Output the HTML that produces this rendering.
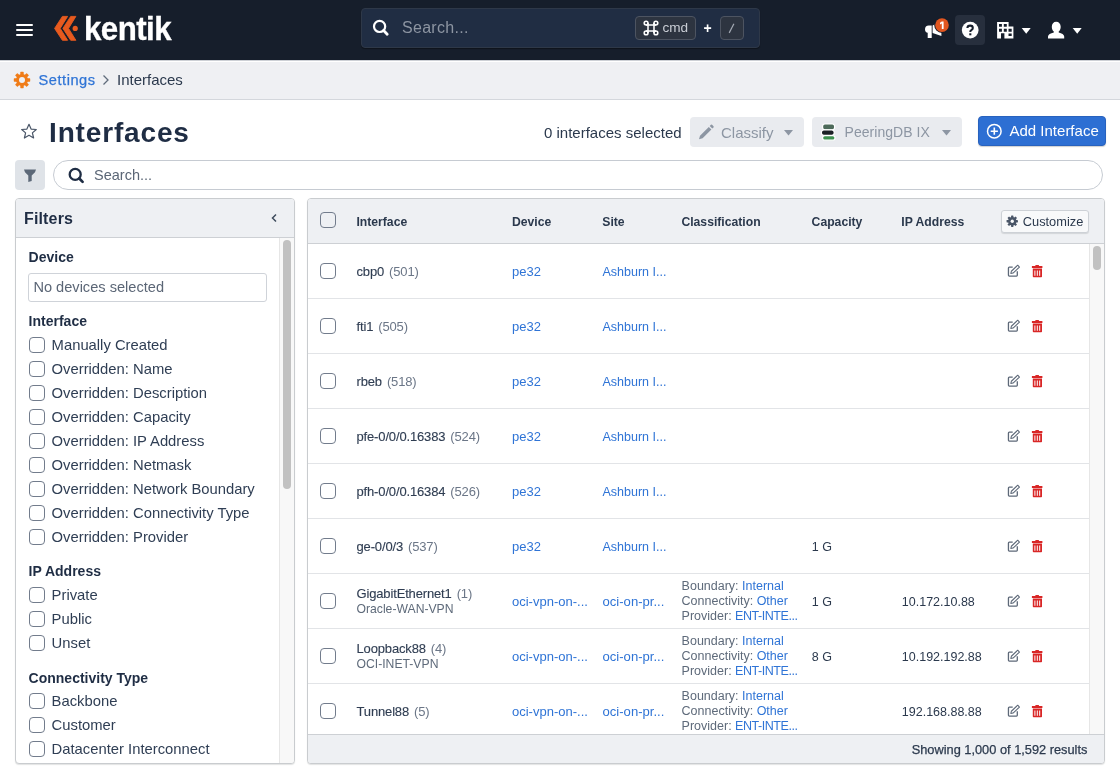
<!DOCTYPE html>
<html><head><meta charset="utf-8">
<style>
*{box-sizing:border-box;margin:0;padding:0}
html,body{width:1120px;height:784px;overflow:hidden;background:#fff;font-family:"Liberation Sans",sans-serif;color:#2b394d}
.a{position:absolute}
.t{position:absolute;white-space:nowrap;line-height:1}
#nav{left:0;top:0;width:1120px;height:60px;background:#161e2b}
#crumb{left:0;top:60px;width:1120px;height:40px;background:#eff0f3;border-bottom:1px solid #d4d7dc}
.cb{position:absolute;width:16px;height:16px;border:1.3px solid #727c8c;border-radius:4px;background:#fff}
.lk{color:#2f74d6}
</style></head><body><div id="root" style="position:absolute;left:0;top:0;width:1120px;height:784px;will-change:transform">
<!-- NAV -->
<div id="nav" class="a">
  <div class="a" style="left:16px;top:24px;width:17px;height:2px;background:#fff;border-radius:1px"></div>
  <div class="a" style="left:16px;top:29px;width:17px;height:2px;background:#fff;border-radius:1px"></div>
  <div class="a" style="left:16px;top:34px;width:17px;height:2px;background:#fff;border-radius:1px"></div>
  <svg class="a" style="left:0;top:0" width="90" height="60" viewBox="0 0 90 60">
    <polygon fill="#e85a1e" stroke="#e85a1e" stroke-width="0.9" stroke-linejoin="round" points="62.4,16.4 67.6,16.4 60.2,28.4 67.6,40.3 62.4,40.3 54.6,28.4"/>
    <polygon fill="#e85a1e" stroke="#e85a1e" stroke-width="0.9" stroke-linejoin="round" points="70.7,16.4 75.9,16.4 68.5,28.4 75.9,40.3 70.7,40.3 62.9,28.4"/>
    <circle fill="#e85a1e" cx="75.2" cy="28.4" r="2.6"/>
  </svg>
  <div class="t" id="logo" style="left:84px;top:11px;font-size:34px;font-weight:700;color:#fff;transform-origin:0 0;transform:scaleX(0.92);letter-spacing:-0.6px;-webkit-text-stroke:0.35px #fff">kentik</div>

  <div class="a" style="left:361px;top:8px;width:399px;height:40px;background:#202d43;border:1px solid #2e3848;border-radius:4px;box-shadow:0 1px 1px rgba(0,0,0,.35)"></div>
  <svg class="a" style="left:372px;top:19px" width="18" height="18" viewBox="0 0 18 18"><circle cx="7.6" cy="7.4" r="5.6" fill="none" stroke="#fff" stroke-width="2.2"/><line x1="11.6" y1="11.5" x2="15.2" y2="15.2" stroke="#fff" stroke-width="2.8" stroke-linecap="round"/></svg>
  <div class="t" style="left:402px;top:20px;font-size:16px;color:#8d95a2;letter-spacing:0.3px">Search...</div>
  <div class="a" style="left:635px;top:16px;width:61px;height:24px;border:1px solid #4d5461;background:#2d3440;border-radius:4px"></div>
  <svg class="a" style="left:642.6px;top:19.8px" width="16" height="16" viewBox="0 0 16 16"><g fill="none" stroke="#fff" stroke-width="1.55"><path d="M5,3 V13 M11,3 V13 M3,5 H13 M3,11 H13"/><circle cx="3.1" cy="3.1" r="1.9"/><circle cx="12.9" cy="3.1" r="1.9"/><circle cx="3.1" cy="12.9" r="1.9"/><circle cx="12.9" cy="12.9" r="1.9"/></g></svg>
  <div class="t" style="left:662.5px;top:21.2px;font-size:13.6px;color:#c9cdd4">cmd</div>
  <div class="t" style="left:703.5px;top:20.5px;font-size:14px;font-weight:700;color:#fff">+</div>
  <div class="a" style="left:720px;top:16px;width:24px;height:24px;border:1px solid #4d5461;background:#2d3440;border-radius:4px"></div>
  <svg class="a" style="left:726px;top:22px" width="12" height="12" viewBox="0 0 12 12"><line x1="7.9" y1="1.8" x2="3.2" y2="10.9" stroke="#a3a9b3" stroke-width="1.2"/></svg>

  <!-- megaphone -->
  <svg class="a" style="left:920px;top:14px" width="30" height="28" viewBox="920 14 30 28">
    <path fill="#fff" d="M925,29.2 q0,-3.8 3.8,-3.8 h2.9 v7.6 h-2.9 q-3.8,0 -3.8,-3.8z M927.7,32.2 h4 v5.7 h-4z M932.6,25.4 l8.8,-4.5 v15.2 l-8.8,-3.1z"/>
    <circle cx="942" cy="25.1" r="7.8" fill="#161e2b"/>
    <circle cx="942" cy="25.1" r="6.8" fill="#e2561f"/>
    <path fill="#fff" d="M941.8,21.4 h1.8 v7.5 h-1.8 v-5.5 l-1.8,1.1 v-1.7z"/>
  </svg>
  <div class="a" style="left:955px;top:15px;width:30px;height:30px;background:#272f3d;border-radius:4px"></div>
  <svg class="a" style="left:955px;top:15px" width="30" height="30" viewBox="0 0 30 30">
    <circle cx="15.2" cy="15.1" r="8.4" fill="#fff"/>
    <path d="M12.4,13 q0.1,-2.35 2.75,-2.35 q2.65,0 2.65,2.3 q0,1.4 -1.5,2.2 q-1,0.5 -1,1.8" fill="none" stroke="#161e2b" stroke-width="2.1"/>
    <rect x="14.25" y="18.3" width="2.1" height="2" fill="#161e2b"/>
  </svg>
  <!-- building -->
  <svg class="a" style="left:996px;top:21px" width="20" height="20" viewBox="996 21 20 20">
    <path fill="#fff" fill-rule="evenodd" d="M997.1,21.9 h11.5 v4.7 h4.8 v11.8 h-16.3z M999,23.9 h2.9 v2.8 h-2.9z M1003.8,23.9 h3 v2.8 h-3z M999,28.8 h2.9 v3 h-2.9z M1003.8,28.8 h3 v3 h-3z M1008.5,28.8 h3.2 v3 h-3.2z M1001,33.3 h3.4 v5.1 h-3.4z M1008.5,33.6 h3.2 v2.3 h-3.2z"/>
  </svg>
  <svg class="a" style="left:1021px;top:27px" width="11" height="8" viewBox="0 0 11 8"><polygon points="0.7,1 9.7,1 5.2,6.8" fill="#fff"/></svg>
  <!-- user -->
  <svg class="a" style="left:1046px;top:20px" width="20" height="20" viewBox="1046 20 20 20">
    <path fill="#fff" d="M1056.2,21.8 C1058.9,21.8 1060.7,23.8 1060.7,26.8 C1060.7,28.8 1060,30.6 1058.7,31.6 V32.6 C1061.8,33.3 1064.2,34.6 1064.2,36.6 V38.4 H1048 V36.6 C1048,34.6 1050.6,33.3 1053.8,32.6 V31.6 C1052.5,30.6 1051.8,28.8 1051.8,26.8 C1051.8,23.8 1053.6,21.8 1056.2,21.8z"/>
  </svg>
  <svg class="a" style="left:1072px;top:27px" width="11" height="8" viewBox="0 0 11 8"><polygon points="0.7,1 9.7,1 5.2,6.8" fill="#fff"/></svg>
</div>

<!-- BREADCRUMB -->
<div id="crumb" class="a"></div>
<div class="a" style="left:0;top:60px;width:1120px;height:1px;background:#cdd0d5"></div>
<div class="a" style="left:0;top:61px;width:1120px;height:1px;background:#fff"></div>
<svg class="a" style="left:13px;top:71px" width="18" height="18" viewBox="0 0 18 18">
  <g fill="#f07c18"><circle cx="9" cy="9" r="6"/>
  <rect x="7.3" y="0.8" width="3.4" height="16.4" rx="0.6"/>
  <rect x="7.3" y="0.8" width="3.4" height="16.4" rx="0.6" transform="rotate(45 9 9)"/>
  <rect x="7.3" y="0.8" width="3.4" height="16.4" rx="0.6" transform="rotate(90 9 9)"/>
  <rect x="7.3" y="0.8" width="3.4" height="16.4" rx="0.6" transform="rotate(135 9 9)"/></g>
  <circle cx="9" cy="9" r="3" fill="#eff0f3"/>
</svg>
<div class="t lk" style="left:38.5px;top:72.5px;font-size:14.6px;letter-spacing:0.55px;-webkit-text-stroke:0.25px #2f74d6">Settings</div>
<svg class="a" style="left:101px;top:74px" width="10" height="12" viewBox="0 0 10 12"><polyline points="2.5,1.5 7,6 2.5,10.5" fill="none" stroke="#5f6b7b" stroke-width="1.3"/></svg>
<div class="t" style="left:117px;top:72px;font-size:15px;color:#2b394d">Interfaces</div>

<!-- PAGE HEADER -->
<svg class="a" style="left:20px;top:123px" width="18" height="17" viewBox="0 0 18 17">
  <polygon points="9,1.3 11.1,6.1 16.3,6.5 12.4,9.9 13.6,15 9,12.3 4.4,15 5.6,9.9 1.7,6.5 6.9,6.1" fill="none" stroke="#4a5668" stroke-width="1.2" stroke-linejoin="round"/>
</svg>
<div class="t" style="left:49px;top:119px;font-size:28px;font-weight:700;color:#1f2d44;letter-spacing:0.85px">Interfaces</div>
<div class="t" style="left:544px;top:124.5px;font-size:15px;color:#2b394d">0 interfaces selected</div>
<div class="a" style="left:690px;top:117px;width:114px;height:30px;background:#e9ebef;border-radius:4px"></div>
<svg class="a" style="left:697px;top:124px" width="18" height="17" viewBox="0 0 18 17"><path d="M2,15.3 l1,-3.6 l8.8,-8.8 l2.6,2.6 l-8.8,8.8z M12.7,2 l1.2,-1.2 q0.6,-0.5 1.2,0 l1.4,1.4 q0.5,0.6 0,1.2 l-1.2,1.2z" fill="#8d96a3"/></svg>
<div class="t" style="left:721px;top:124.6px;font-size:15px;color:#8d96a3">Classify</div>
<svg class="a" style="left:783px;top:129px" width="11" height="8" viewBox="0 0 11 8"><polygon points="1,1 10,1 5.5,6.5" fill="#8d96a3"/></svg>

<div class="a" style="left:812px;top:117px;width:150px;height:30px;background:#e9ebef;border-radius:4px"></div>
<svg class="a" style="left:815px;top:118px" width="26" height="28" viewBox="815 118 26 28">
  <g stroke="#fff" stroke-width="1.2">
  <rect x="822.6" y="124" width="12" height="5.8" rx="2.2" fill="#4d6a5a"/>
  <rect x="821.4" y="130" width="12.8" height="5.3" rx="2.4" fill="#1b2025"/>
  <rect x="822.6" y="135.6" width="12.4" height="4.6" rx="2.2" fill="#3e9150"/>
  </g>
</svg>
<div class="t" style="left:844.5px;top:125.2px;font-size:14px;color:#8d96a3;letter-spacing:0.05px">PeeringDB IX</div>
<svg class="a" style="left:941px;top:129px" width="11" height="8" viewBox="0 0 11 8"><polygon points="1,1 10,1 5.5,6.5" fill="#8d96a3"/></svg>

<div class="a" style="left:978px;top:116px;width:128px;height:30px;background:#2d6fd3;border-radius:4px;border:1px solid #2862be;box-shadow:0 1px 1px rgba(16,22,26,.2)"></div>
<svg class="a" style="left:985px;top:122px" width="18" height="18" viewBox="0 0 18 18"><circle cx="9.3" cy="9.2" r="6.8" fill="none" stroke="#fff" stroke-width="1.5"/><path d="M9.3,5.6 v7.2 M5.7,9.2 h7.2" stroke="#fff" stroke-width="1.6"/></svg>
<div class="t" style="left:1009.5px;top:123.4px;font-size:15px;color:#fff">Add Interface</div>

<!-- filter button & search -->
<div class="a" style="left:15px;top:160px;width:30px;height:30px;background:#dfe3e8;border-radius:4px"></div>
<svg class="a" style="left:22px;top:167px" width="16" height="16" viewBox="0 0 16 16"><path d="M2,2.5 h12 l-1,2.8 l-3.3,3.3 v5.4 l-3.4,1 v-6.4 l-3.3,-3.3z" fill="#5c6878"/></svg>
<div class="a" style="left:53px;top:160px;width:1050px;height:30px;border:1px solid #c6cbd2;border-radius:15px;background:#fff"></div>
<svg class="a" style="left:67px;top:167px" width="18" height="18" viewBox="0 0 18 18"><circle cx="8.2" cy="7.4" r="5.5" fill="none" stroke="#1f2d44" stroke-width="2.3"/><line x1="12.3" y1="11.5" x2="15.6" y2="14.9" stroke="#1f2d44" stroke-width="2.7" stroke-linecap="round"/></svg>
<div class="t" style="left:94px;top:168px;font-size:14.5px;color:#5b6676">Search...</div>

<!-- FILTER PANEL -->
<div class="a" id="fp" style="left:15px;top:198px;width:280px;height:566px;border:1px solid #c9cccf;border-radius:4px;background:#fff;overflow:hidden;box-shadow:0 1px 1px rgba(16,22,26,.12)">
  <div class="a" style="left:0;top:0;width:278px;height:39px;background:#eef0f3;border-bottom:1px solid #cdd0d4"></div>
  <div class="a" style="left:263px;top:39px;width:15px;height:526px;background:#f8f8f8;border-left:1px solid #e6e6e6"></div>
  <div class="a" style="left:267px;top:41px;width:8px;height:249px;background:#c1c1c1;border-radius:4px"></div>
</div>
<div class="t" style="left:24px;top:210.6px;font-size:16px;font-weight:700;color:#1f2d44;letter-spacing:0.15px">Filters</div>
<svg class="a" style="left:269px;top:212px" width="10" height="12" viewBox="0 0 10 12"><polyline points="7,2.5 3.5,6 7,9.5" fill="none" stroke="#3e4b5d" stroke-width="1.5"/></svg>

<div class="t" style="left:28.6px;top:250.15px;font-size:14px;font-weight:700;color:#1f2d44">Device</div>
<div class="a" style="left:28px;top:272.5px;width:239px;height:29.5px;border:1px solid #cfd3d9;border-radius:3px"></div>
<div class="t" style="left:33.4px;top:280.14px;font-size:14.6px;color:#5b6676">No devices selected</div>
<div class="t" style="left:28.6px;top:314.25px;font-size:14px;font-weight:700;color:#1f2d44">Interface</div>
<div class="cb" style="left:29px;top:337px"></div>
<div class="t" style="left:51.6px;top:337.57px;font-size:14.8px;color:#2f3e54">Manually Created</div>
<div class="cb" style="left:29px;top:361px"></div>
<div class="t" style="left:51.6px;top:361.57px;font-size:14.8px;color:#2f3e54">Overridden: Name</div>
<div class="cb" style="left:29px;top:385px"></div>
<div class="t" style="left:51.6px;top:385.57px;font-size:14.8px;color:#2f3e54">Overridden: Description</div>
<div class="cb" style="left:29px;top:409px"></div>
<div class="t" style="left:51.6px;top:409.57px;font-size:14.8px;color:#2f3e54">Overridden: Capacity</div>
<div class="cb" style="left:29px;top:433px"></div>
<div class="t" style="left:51.6px;top:433.57px;font-size:14.8px;color:#2f3e54">Overridden: IP Address</div>
<div class="cb" style="left:29px;top:457px"></div>
<div class="t" style="left:51.6px;top:457.57px;font-size:14.8px;color:#2f3e54">Overridden: Netmask</div>
<div class="cb" style="left:29px;top:481px"></div>
<div class="t" style="left:51.6px;top:481.57px;font-size:14.8px;color:#2f3e54">Overridden: Network Boundary</div>
<div class="cb" style="left:29px;top:505px"></div>
<div class="t" style="left:51.6px;top:505.57px;font-size:14.8px;color:#2f3e54">Overridden: Connectivity Type</div>
<div class="cb" style="left:29px;top:529px"></div>
<div class="t" style="left:51.6px;top:529.57px;font-size:14.8px;color:#2f3e54">Overridden: Provider</div>
<div class="t" style="left:28.6px;top:564.45px;font-size:14px;font-weight:700;color:#1f2d44">IP Address</div>
<div class="cb" style="left:29px;top:587px"></div>
<div class="t" style="left:51.6px;top:587.77px;font-size:14.8px;color:#2f3e54">Private</div>
<div class="cb" style="left:29px;top:611px"></div>
<div class="t" style="left:51.6px;top:611.77px;font-size:14.8px;color:#2f3e54">Public</div>
<div class="cb" style="left:29px;top:635px"></div>
<div class="t" style="left:51.6px;top:635.77px;font-size:14.8px;color:#2f3e54">Unset</div>
<div class="t" style="left:28.6px;top:670.85px;font-size:14px;font-weight:700;color:#1f2d44">Connectivity Type</div>
<div class="cb" style="left:29px;top:693px"></div>
<div class="t" style="left:51.6px;top:693.87px;font-size:14.8px;color:#2f3e54">Backbone</div>
<div class="cb" style="left:29px;top:717px"></div>
<div class="t" style="left:51.6px;top:717.87px;font-size:14.8px;color:#2f3e54">Customer</div>
<div class="cb" style="left:29px;top:741px"></div>
<div class="t" style="left:51.6px;top:741.87px;font-size:14.8px;color:#2f3e54">Datacenter Interconnect</div>


<!-- TABLE PANEL -->
<div class="a" id="tp" style="left:307px;top:198px;width:798px;height:566px;border:1px solid #c9cccf;border-radius:4px;background:#fff;overflow:hidden;box-shadow:0 1px 1px rgba(16,22,26,.12)">
  <div class="a" style="left:0;top:0;width:796px;height:45px;background:#eef0f3;border-bottom:1px solid #cdd0d4"></div>
  <div class="a" style="left:781px;top:45px;width:15px;height:490px;background:#f8f8f8;border-left:1px solid #e6e6e6"></div>
  <div class="a" style="left:785px;top:47px;width:8px;height:24px;background:#c1c1c1;border-radius:4px"></div>
  <div class="a" style="left:0;top:535px;width:796px;height:30px;background:#eef0f3;border-top:1px solid #cdd0d4"></div>
</div>
<div class="cb" style="left:320px;top:212px;background:transparent"></div>
<div class="t" style="left:356.4px;top:215.87px;font-size:12.2px;font-weight:700;color:#2b394d">Interface</div>
<div class="t" style="left:512px;top:215.87px;font-size:12.2px;font-weight:700;color:#2b394d">Device</div>
<div class="t" style="left:602.3px;top:215.87px;font-size:12.2px;font-weight:700;color:#2b394d">Site</div>
<div class="t" style="left:681.4px;top:215.87px;font-size:12.2px;font-weight:700;color:#2b394d">Classification</div>
<div class="t" style="left:811.6px;top:215.87px;font-size:12.2px;font-weight:700;color:#2b394d">Capacity</div>
<div class="t" style="left:901.3px;top:215.87px;font-size:12.2px;font-weight:700;color:#2b394d">IP Address</div>
<div class="a" style="left:1001px;top:209.5px;width:88px;height:23.5px;background:#f8f9fa;border:1px solid #cdd1d6;border-radius:3px;box-shadow:0 1px 1px rgba(16,22,26,.12)"></div>
<svg class="a" style="left:1006px;top:215px" width="12.5" height="12.5" viewBox="0 0 18 18"><g fill="#4a5668"><circle cx="9" cy="9" r="6"/><rect x="7.3" y="0.8" width="3.4" height="16.4" rx="0.6"/><rect x="7.3" y="0.8" width="3.4" height="16.4" rx="0.6" transform="rotate(45 9 9)"/><rect x="7.3" y="0.8" width="3.4" height="16.4" rx="0.6" transform="rotate(90 9 9)"/><rect x="7.3" y="0.8" width="3.4" height="16.4" rx="0.6" transform="rotate(135 9 9)"/></g><circle cx="9" cy="9" r="2.4" fill="#f8f9fa"/></svg>
<div class="t" style="left:1022.8px;top:215.66px;font-size:12.8px;color:#2b394d">Customize</div>
<div class="a" style="left:0;top:244px;width:1120px;height:490px;overflow:hidden"><div class="a" style="left:0;top:-244px;width:1120px;height:784px"><div class="a" style="left:308px;top:298px;width:781px;height:1px;background:#e2e4e7"></div>
<div class="cb" style="left:320px;top:263px"></div>
<div class="t" style="left:356.5px;top:264.70px;font-size:13px;color:#2f3d52;letter-spacing:-0.15px"><span style="-webkit-text-stroke:0.12px #2f3d52">cbp0</span> <span style="color:#6b7687;margin-left:1.5px">(501)</span></div>
<div class="t" style="left:512px;top:264.70px;font-size:13px;color:#2f74d6">pe32</div>
<div class="t" style="left:602.5px;top:265.62px;font-size:12.5px;color:#2f74d6">Ashburn I...</div>
<svg class="a" style="left:1006px;top:264px" width="15" height="14" viewBox="0 0 15 14"><path d="M6.7,3.15 H3.3 Q2.45,3.15 2.45,4 V11.3 Q2.45,12.1 3.3,12.1 H10.5 Q11.3,12.1 11.3,11.3 V7.3" fill="none" stroke="#5d6878" stroke-width="1.3"/><path d="M4.8,9.5 L5.35,7.25 L11.7,1.2 L13.45,3.05 L7.05,9.05 Z" fill="none" stroke="#5d6878" stroke-width="1.05" stroke-linejoin="round"/></svg>
<svg class="a" style="left:1031px;top:264px" width="13" height="14" viewBox="0 0 13 14"><path d="M0.9,2 H11.4 V4 H0.9z M4.4,1 H7.9 V2.2 H4.4z" fill="#d92626"/><path d="M1.8,4.6 H11 V12.4 Q11,13.2 10.2,13.2 H2.6 Q1.8,13.2 1.8,12.4z" fill="#d92626"/><path d="M3.9,6.5 V11.8 M6.3,6.5 V11.8 M8.7,6.5 V11.8" stroke="#fff" stroke-width="1"/></svg>
<div class="a" style="left:308px;top:353px;width:781px;height:1px;background:#e2e4e7"></div>
<div class="cb" style="left:320px;top:318px"></div>
<div class="t" style="left:356.5px;top:319.70px;font-size:13px;color:#2f3d52;letter-spacing:-0.15px"><span style="-webkit-text-stroke:0.12px #2f3d52">fti1</span> <span style="color:#6b7687;margin-left:1.5px">(505)</span></div>
<div class="t" style="left:512px;top:319.70px;font-size:13px;color:#2f74d6">pe32</div>
<div class="t" style="left:602.5px;top:320.62px;font-size:12.5px;color:#2f74d6">Ashburn I...</div>
<svg class="a" style="left:1006px;top:319px" width="15" height="14" viewBox="0 0 15 14"><path d="M6.7,3.15 H3.3 Q2.45,3.15 2.45,4 V11.3 Q2.45,12.1 3.3,12.1 H10.5 Q11.3,12.1 11.3,11.3 V7.3" fill="none" stroke="#5d6878" stroke-width="1.3"/><path d="M4.8,9.5 L5.35,7.25 L11.7,1.2 L13.45,3.05 L7.05,9.05 Z" fill="none" stroke="#5d6878" stroke-width="1.05" stroke-linejoin="round"/></svg>
<svg class="a" style="left:1031px;top:319px" width="13" height="14" viewBox="0 0 13 14"><path d="M0.9,2 H11.4 V4 H0.9z M4.4,1 H7.9 V2.2 H4.4z" fill="#d92626"/><path d="M1.8,4.6 H11 V12.4 Q11,13.2 10.2,13.2 H2.6 Q1.8,13.2 1.8,12.4z" fill="#d92626"/><path d="M3.9,6.5 V11.8 M6.3,6.5 V11.8 M8.7,6.5 V11.8" stroke="#fff" stroke-width="1"/></svg>
<div class="a" style="left:308px;top:408px;width:781px;height:1px;background:#e2e4e7"></div>
<div class="cb" style="left:320px;top:373px"></div>
<div class="t" style="left:356.5px;top:374.70px;font-size:13px;color:#2f3d52;letter-spacing:-0.15px"><span style="-webkit-text-stroke:0.12px #2f3d52">rbeb</span> <span style="color:#6b7687;margin-left:1.5px">(518)</span></div>
<div class="t" style="left:512px;top:374.70px;font-size:13px;color:#2f74d6">pe32</div>
<div class="t" style="left:602.5px;top:375.62px;font-size:12.5px;color:#2f74d6">Ashburn I...</div>
<svg class="a" style="left:1006px;top:374px" width="15" height="14" viewBox="0 0 15 14"><path d="M6.7,3.15 H3.3 Q2.45,3.15 2.45,4 V11.3 Q2.45,12.1 3.3,12.1 H10.5 Q11.3,12.1 11.3,11.3 V7.3" fill="none" stroke="#5d6878" stroke-width="1.3"/><path d="M4.8,9.5 L5.35,7.25 L11.7,1.2 L13.45,3.05 L7.05,9.05 Z" fill="none" stroke="#5d6878" stroke-width="1.05" stroke-linejoin="round"/></svg>
<svg class="a" style="left:1031px;top:374px" width="13" height="14" viewBox="0 0 13 14"><path d="M0.9,2 H11.4 V4 H0.9z M4.4,1 H7.9 V2.2 H4.4z" fill="#d92626"/><path d="M1.8,4.6 H11 V12.4 Q11,13.2 10.2,13.2 H2.6 Q1.8,13.2 1.8,12.4z" fill="#d92626"/><path d="M3.9,6.5 V11.8 M6.3,6.5 V11.8 M8.7,6.5 V11.8" stroke="#fff" stroke-width="1"/></svg>
<div class="a" style="left:308px;top:463px;width:781px;height:1px;background:#e2e4e7"></div>
<div class="cb" style="left:320px;top:428px"></div>
<div class="t" style="left:356.5px;top:429.70px;font-size:13px;color:#2f3d52;letter-spacing:-0.15px"><span style="-webkit-text-stroke:0.12px #2f3d52">pfe-0/0/0.16383</span> <span style="color:#6b7687;margin-left:1.5px">(524)</span></div>
<div class="t" style="left:512px;top:429.70px;font-size:13px;color:#2f74d6">pe32</div>
<div class="t" style="left:602.5px;top:430.62px;font-size:12.5px;color:#2f74d6">Ashburn I...</div>
<svg class="a" style="left:1006px;top:429px" width="15" height="14" viewBox="0 0 15 14"><path d="M6.7,3.15 H3.3 Q2.45,3.15 2.45,4 V11.3 Q2.45,12.1 3.3,12.1 H10.5 Q11.3,12.1 11.3,11.3 V7.3" fill="none" stroke="#5d6878" stroke-width="1.3"/><path d="M4.8,9.5 L5.35,7.25 L11.7,1.2 L13.45,3.05 L7.05,9.05 Z" fill="none" stroke="#5d6878" stroke-width="1.05" stroke-linejoin="round"/></svg>
<svg class="a" style="left:1031px;top:429px" width="13" height="14" viewBox="0 0 13 14"><path d="M0.9,2 H11.4 V4 H0.9z M4.4,1 H7.9 V2.2 H4.4z" fill="#d92626"/><path d="M1.8,4.6 H11 V12.4 Q11,13.2 10.2,13.2 H2.6 Q1.8,13.2 1.8,12.4z" fill="#d92626"/><path d="M3.9,6.5 V11.8 M6.3,6.5 V11.8 M8.7,6.5 V11.8" stroke="#fff" stroke-width="1"/></svg>
<div class="a" style="left:308px;top:518px;width:781px;height:1px;background:#e2e4e7"></div>
<div class="cb" style="left:320px;top:483px"></div>
<div class="t" style="left:356.5px;top:484.70px;font-size:13px;color:#2f3d52;letter-spacing:-0.15px"><span style="-webkit-text-stroke:0.12px #2f3d52">pfh-0/0/0.16384</span> <span style="color:#6b7687;margin-left:1.5px">(526)</span></div>
<div class="t" style="left:512px;top:484.70px;font-size:13px;color:#2f74d6">pe32</div>
<div class="t" style="left:602.5px;top:485.62px;font-size:12.5px;color:#2f74d6">Ashburn I...</div>
<svg class="a" style="left:1006px;top:484px" width="15" height="14" viewBox="0 0 15 14"><path d="M6.7,3.15 H3.3 Q2.45,3.15 2.45,4 V11.3 Q2.45,12.1 3.3,12.1 H10.5 Q11.3,12.1 11.3,11.3 V7.3" fill="none" stroke="#5d6878" stroke-width="1.3"/><path d="M4.8,9.5 L5.35,7.25 L11.7,1.2 L13.45,3.05 L7.05,9.05 Z" fill="none" stroke="#5d6878" stroke-width="1.05" stroke-linejoin="round"/></svg>
<svg class="a" style="left:1031px;top:484px" width="13" height="14" viewBox="0 0 13 14"><path d="M0.9,2 H11.4 V4 H0.9z M4.4,1 H7.9 V2.2 H4.4z" fill="#d92626"/><path d="M1.8,4.6 H11 V12.4 Q11,13.2 10.2,13.2 H2.6 Q1.8,13.2 1.8,12.4z" fill="#d92626"/><path d="M3.9,6.5 V11.8 M6.3,6.5 V11.8 M8.7,6.5 V11.8" stroke="#fff" stroke-width="1"/></svg>
<div class="a" style="left:308px;top:573px;width:781px;height:1px;background:#e2e4e7"></div>
<div class="cb" style="left:320px;top:538px"></div>
<div class="t" style="left:356.5px;top:539.70px;font-size:13px;color:#2f3d52;letter-spacing:-0.15px"><span style="-webkit-text-stroke:0.12px #2f3d52">ge-0/0/3</span> <span style="color:#6b7687;margin-left:1.5px">(537)</span></div>
<div class="t" style="left:512px;top:539.70px;font-size:13px;color:#2f74d6">pe32</div>
<div class="t" style="left:602.5px;top:540.62px;font-size:12.5px;color:#2f74d6">Ashburn I...</div>
<div class="t" style="left:811.8px;top:540.92px;font-size:12.5px;color:#2b394d">1 G</div>
<svg class="a" style="left:1006px;top:539px" width="15" height="14" viewBox="0 0 15 14"><path d="M6.7,3.15 H3.3 Q2.45,3.15 2.45,4 V11.3 Q2.45,12.1 3.3,12.1 H10.5 Q11.3,12.1 11.3,11.3 V7.3" fill="none" stroke="#5d6878" stroke-width="1.3"/><path d="M4.8,9.5 L5.35,7.25 L11.7,1.2 L13.45,3.05 L7.05,9.05 Z" fill="none" stroke="#5d6878" stroke-width="1.05" stroke-linejoin="round"/></svg>
<svg class="a" style="left:1031px;top:539px" width="13" height="14" viewBox="0 0 13 14"><path d="M0.9,2 H11.4 V4 H0.9z M4.4,1 H7.9 V2.2 H4.4z" fill="#d92626"/><path d="M1.8,4.6 H11 V12.4 Q11,13.2 10.2,13.2 H2.6 Q1.8,13.2 1.8,12.4z" fill="#d92626"/><path d="M3.9,6.5 V11.8 M6.3,6.5 V11.8 M8.7,6.5 V11.8" stroke="#fff" stroke-width="1"/></svg>
<div class="a" style="left:308px;top:628px;width:781px;height:1px;background:#e2e4e7"></div>
<div class="cb" style="left:320px;top:593px"></div>
<div class="t" style="left:356.5px;top:587.10px;font-size:13px;color:#2f3d52;letter-spacing:-0.15px"><span style="-webkit-text-stroke:0.12px #2f3d52">GigabitEthernet1</span> <span style="color:#6b7687;margin-left:1.5px">(1)</span></div>
<div class="t" style="left:356.5px;top:602.87px;font-size:12.2px;color:#5e6a7a">Oracle-WAN-VPN</div>
<div class="t" style="left:512px;top:594.70px;font-size:13px;color:#2f74d6">oci-vpn-on-...</div>
<div class="t" style="left:602.5px;top:594.61px;font-size:13.1px;color:#2f74d6">oci-on-pr...</div>
<div class="t" style="left:681.6px;top:579.82px;font-size:12.5px;color:#5e6a7a">Boundary: <span style="color:#2f74d6">Internal</span></div>
<div class="t" style="left:681.6px;top:595.22px;font-size:12.5px;color:#5e6a7a">Connectivity: <span style="color:#2f74d6">Other</span></div>
<div class="t" style="left:681.6px;top:610.22px;font-size:12.5px;color:#5e6a7a">Provider: <span style="color:#2f74d6;letter-spacing:-0.45px">ENT-INTE...</span></div>
<div class="t" style="left:811.8px;top:595.92px;font-size:12.5px;color:#2b394d">1 G</div>
<div class="t" style="left:901.8px;top:595.92px;font-size:12.5px;color:#2b394d">10.172.10.88</div>
<svg class="a" style="left:1006px;top:594px" width="15" height="14" viewBox="0 0 15 14"><path d="M6.7,3.15 H3.3 Q2.45,3.15 2.45,4 V11.3 Q2.45,12.1 3.3,12.1 H10.5 Q11.3,12.1 11.3,11.3 V7.3" fill="none" stroke="#5d6878" stroke-width="1.3"/><path d="M4.8,9.5 L5.35,7.25 L11.7,1.2 L13.45,3.05 L7.05,9.05 Z" fill="none" stroke="#5d6878" stroke-width="1.05" stroke-linejoin="round"/></svg>
<svg class="a" style="left:1031px;top:594px" width="13" height="14" viewBox="0 0 13 14"><path d="M0.9,2 H11.4 V4 H0.9z M4.4,1 H7.9 V2.2 H4.4z" fill="#d92626"/><path d="M1.8,4.6 H11 V12.4 Q11,13.2 10.2,13.2 H2.6 Q1.8,13.2 1.8,12.4z" fill="#d92626"/><path d="M3.9,6.5 V11.8 M6.3,6.5 V11.8 M8.7,6.5 V11.8" stroke="#fff" stroke-width="1"/></svg>
<div class="a" style="left:308px;top:683px;width:781px;height:1px;background:#e2e4e7"></div>
<div class="cb" style="left:320px;top:648px"></div>
<div class="t" style="left:356.5px;top:642.10px;font-size:13px;color:#2f3d52;letter-spacing:-0.15px"><span style="-webkit-text-stroke:0.12px #2f3d52">Loopback88</span> <span style="color:#6b7687;margin-left:1.5px">(4)</span></div>
<div class="t" style="left:356.5px;top:657.87px;font-size:12.2px;color:#5e6a7a">OCI-INET-VPN</div>
<div class="t" style="left:512px;top:649.70px;font-size:13px;color:#2f74d6">oci-vpn-on-...</div>
<div class="t" style="left:602.5px;top:649.61px;font-size:13.1px;color:#2f74d6">oci-on-pr...</div>
<div class="t" style="left:681.6px;top:634.82px;font-size:12.5px;color:#5e6a7a">Boundary: <span style="color:#2f74d6">Internal</span></div>
<div class="t" style="left:681.6px;top:650.22px;font-size:12.5px;color:#5e6a7a">Connectivity: <span style="color:#2f74d6">Other</span></div>
<div class="t" style="left:681.6px;top:665.22px;font-size:12.5px;color:#5e6a7a">Provider: <span style="color:#2f74d6;letter-spacing:-0.45px">ENT-INTE...</span></div>
<div class="t" style="left:811.8px;top:650.92px;font-size:12.5px;color:#2b394d">8 G</div>
<div class="t" style="left:901.8px;top:650.92px;font-size:12.5px;color:#2b394d">10.192.192.88</div>
<svg class="a" style="left:1006px;top:649px" width="15" height="14" viewBox="0 0 15 14"><path d="M6.7,3.15 H3.3 Q2.45,3.15 2.45,4 V11.3 Q2.45,12.1 3.3,12.1 H10.5 Q11.3,12.1 11.3,11.3 V7.3" fill="none" stroke="#5d6878" stroke-width="1.3"/><path d="M4.8,9.5 L5.35,7.25 L11.7,1.2 L13.45,3.05 L7.05,9.05 Z" fill="none" stroke="#5d6878" stroke-width="1.05" stroke-linejoin="round"/></svg>
<svg class="a" style="left:1031px;top:649px" width="13" height="14" viewBox="0 0 13 14"><path d="M0.9,2 H11.4 V4 H0.9z M4.4,1 H7.9 V2.2 H4.4z" fill="#d92626"/><path d="M1.8,4.6 H11 V12.4 Q11,13.2 10.2,13.2 H2.6 Q1.8,13.2 1.8,12.4z" fill="#d92626"/><path d="M3.9,6.5 V11.8 M6.3,6.5 V11.8 M8.7,6.5 V11.8" stroke="#fff" stroke-width="1"/></svg>
<div class="a" style="left:308px;top:738px;width:781px;height:1px;background:#e2e4e7"></div>
<div class="cb" style="left:320px;top:703px"></div>
<div class="t" style="left:356.5px;top:704.70px;font-size:13px;color:#2f3d52;letter-spacing:-0.15px"><span style="-webkit-text-stroke:0.12px #2f3d52">Tunnel88</span> <span style="color:#6b7687;margin-left:1.5px">(5)</span></div>
<div class="t" style="left:512px;top:704.70px;font-size:13px;color:#2f74d6">oci-vpn-on-...</div>
<div class="t" style="left:602.5px;top:704.61px;font-size:13.1px;color:#2f74d6">oci-on-pr...</div>
<div class="t" style="left:681.6px;top:689.82px;font-size:12.5px;color:#5e6a7a">Boundary: <span style="color:#2f74d6">Internal</span></div>
<div class="t" style="left:681.6px;top:705.22px;font-size:12.5px;color:#5e6a7a">Connectivity: <span style="color:#2f74d6">Other</span></div>
<div class="t" style="left:681.6px;top:720.22px;font-size:12.5px;color:#5e6a7a">Provider: <span style="color:#2f74d6;letter-spacing:-0.45px">ENT-INTE...</span></div>
<div class="t" style="left:901.8px;top:705.92px;font-size:12.5px;color:#2b394d">192.168.88.88</div>
<svg class="a" style="left:1006px;top:704px" width="15" height="14" viewBox="0 0 15 14"><path d="M6.7,3.15 H3.3 Q2.45,3.15 2.45,4 V11.3 Q2.45,12.1 3.3,12.1 H10.5 Q11.3,12.1 11.3,11.3 V7.3" fill="none" stroke="#5d6878" stroke-width="1.3"/><path d="M4.8,9.5 L5.35,7.25 L11.7,1.2 L13.45,3.05 L7.05,9.05 Z" fill="none" stroke="#5d6878" stroke-width="1.05" stroke-linejoin="round"/></svg>
<svg class="a" style="left:1031px;top:704px" width="13" height="14" viewBox="0 0 13 14"><path d="M0.9,2 H11.4 V4 H0.9z M4.4,1 H7.9 V2.2 H4.4z" fill="#d92626"/><path d="M1.8,4.6 H11 V12.4 Q11,13.2 10.2,13.2 H2.6 Q1.8,13.2 1.8,12.4z" fill="#d92626"/><path d="M3.9,6.5 V11.8 M6.3,6.5 V11.8 M8.7,6.5 V11.8" stroke="#fff" stroke-width="1"/></svg>
</div></div>
<div class="t" style="left:911.7px;top:743.96px;font-size:12.8px;color:#2b394d;-webkit-text-stroke:0.25px #2b394d">Showing 1,000 of 1,592 results</div>

</div></body></html>
